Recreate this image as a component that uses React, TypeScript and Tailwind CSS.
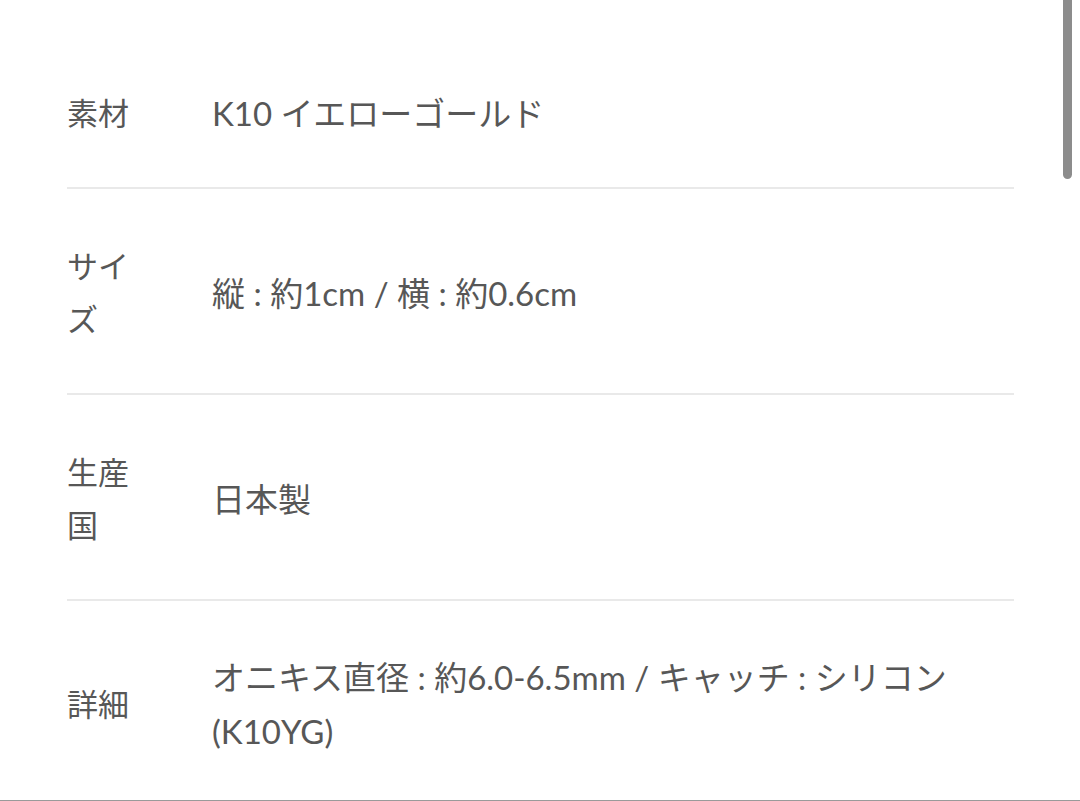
import React from "react";

const rows: { label: string; value: React.ReactNode; pt: string; pb: string }[] = [
  { label: "素材", value: "K10 イエローゴールド", pt: "pt-[86px]", pb: "pb-[47px]" },
  { label: "サイズ", value: "縦 : 約1cm / 横 : 約0.6cm", pt: "pt-[51px]", pb: "pb-[47px]" },
  { label: "生産国", value: "日本製", pt: "pt-[51px]", pb: "pb-[47px]" },
  {
    label: "詳細",
    value: "オニキス直径 : 約6.0-6.5mm / キャッチ : シリコン (K10YG)",
    pt: "pt-[49px]",
    pb: "pb-[40px]",
  },
];

export default function App() {
  return (
    <div
      className="relative w-[1080px] h-[801px] overflow-hidden bg-white text-[#575757]"
      style={{ fontFamily: 'Lato, "Noto Sans CJK JP", sans-serif' }}
    >
      <div className="pl-[67px] pr-[66px]">
        {rows.map((r, i) => (
          <div
            key={r.label}
            className={`flex items-center ${r.pt} ${r.pb} ${i < rows.length - 1 ? "border-b-2 border-[#e9e9e9]" : ""}`}
          >
            <div className="w-[66px] shrink-0 text-[31px] leading-[53px] break-all">{r.label}</div>
            <div className="ml-[79px] flex-1 text-[33px] leading-[54px] pr-[30px]">{r.value}</div>
          </div>
        ))}
      </div>
      <div className="absolute bottom-0 left-0 right-0 h-px bg-[#9a9a9a]" />
      <div className="absolute top-0 right-[8px] w-[9px] h-[179px] rounded-b-full bg-[#8c8c8c]" />
    </div>
  );
}
